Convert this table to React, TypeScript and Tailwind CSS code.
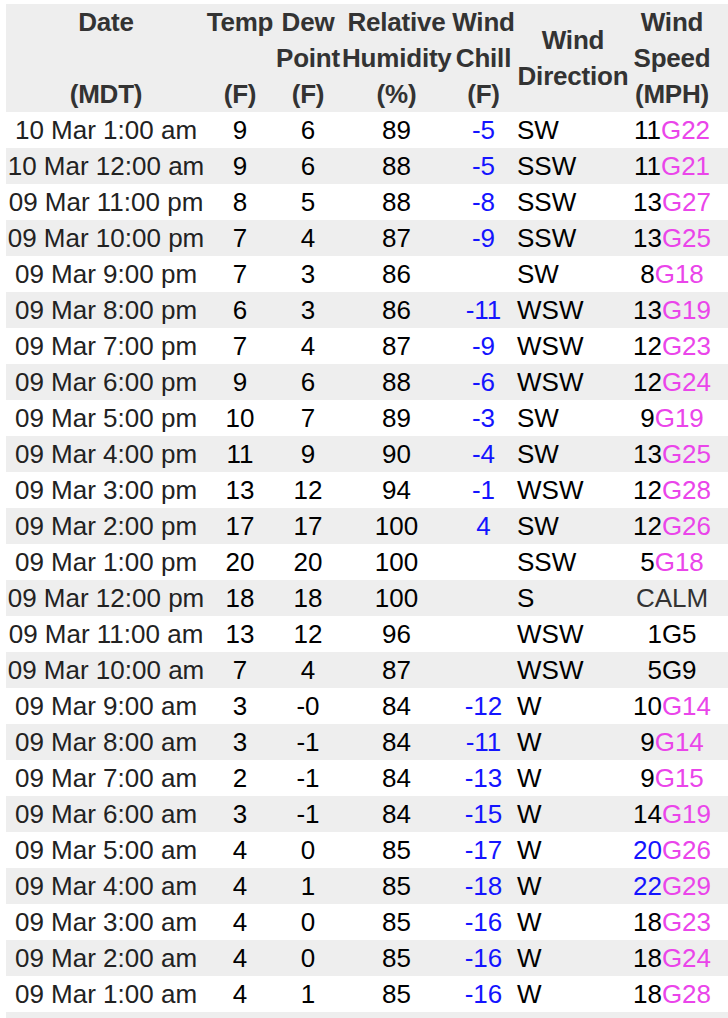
type Row = {
  date: string;
  temp: string;
  dew: string;
  rh: string;
  chill: string;
  dir: string;
  speed: string;
  gust?: string;
  speedBlue?: boolean;
  plainGust?: boolean;
};

const rows: Row[] = [
  { date: "10 Mar 1:00 am", temp: "9", dew: "6", rh: "89", chill: "-5", dir: "SW", speed: "11", gust: "G22" },
  { date: "10 Mar 12:00 am", temp: "9", dew: "6", rh: "88", chill: "-5", dir: "SSW", speed: "11", gust: "G21" },
  { date: "09 Mar 11:00 pm", temp: "8", dew: "5", rh: "88", chill: "-8", dir: "SSW", speed: "13", gust: "G27" },
  { date: "09 Mar 10:00 pm", temp: "7", dew: "4", rh: "87", chill: "-9", dir: "SSW", speed: "13", gust: "G25" },
  { date: "09 Mar 9:00 pm", temp: "7", dew: "3", rh: "86", chill: "", dir: "SW", speed: "8", gust: "G18" },
  { date: "09 Mar 8:00 pm", temp: "6", dew: "3", rh: "86", chill: "-11", dir: "WSW", speed: "13", gust: "G19" },
  { date: "09 Mar 7:00 pm", temp: "7", dew: "4", rh: "87", chill: "-9", dir: "WSW", speed: "12", gust: "G23" },
  { date: "09 Mar 6:00 pm", temp: "9", dew: "6", rh: "88", chill: "-6", dir: "WSW", speed: "12", gust: "G24" },
  { date: "09 Mar 5:00 pm", temp: "10", dew: "7", rh: "89", chill: "-3", dir: "SW", speed: "9", gust: "G19" },
  { date: "09 Mar 4:00 pm", temp: "11", dew: "9", rh: "90", chill: "-4", dir: "SW", speed: "13", gust: "G25" },
  { date: "09 Mar 3:00 pm", temp: "13", dew: "12", rh: "94", chill: "-1", dir: "WSW", speed: "12", gust: "G28" },
  { date: "09 Mar 2:00 pm", temp: "17", dew: "17", rh: "100", chill: "4", dir: "SW", speed: "12", gust: "G26" },
  { date: "09 Mar 1:00 pm", temp: "20", dew: "20", rh: "100", chill: "", dir: "SSW", speed: "5", gust: "G18" },
  { date: "09 Mar 12:00 pm", temp: "18", dew: "18", rh: "100", chill: "", dir: "S", speed: "CALM" },
  { date: "09 Mar 11:00 am", temp: "13", dew: "12", rh: "96", chill: "", dir: "WSW", speed: "1", gust: "G5", plainGust: true },
  { date: "09 Mar 10:00 am", temp: "7", dew: "4", rh: "87", chill: "", dir: "WSW", speed: "5", gust: "G9", plainGust: true },
  { date: "09 Mar 9:00 am", temp: "3", dew: "-0", rh: "84", chill: "-12", dir: "W", speed: "10", gust: "G14" },
  { date: "09 Mar 8:00 am", temp: "3", dew: "-1", rh: "84", chill: "-11", dir: "W", speed: "9", gust: "G14" },
  { date: "09 Mar 7:00 am", temp: "2", dew: "-1", rh: "84", chill: "-13", dir: "W", speed: "9", gust: "G15" },
  { date: "09 Mar 6:00 am", temp: "3", dew: "-1", rh: "84", chill: "-15", dir: "W", speed: "14", gust: "G19" },
  { date: "09 Mar 5:00 am", temp: "4", dew: "0", rh: "85", chill: "-17", dir: "W", speed: "20", gust: "G26", speedBlue: true },
  { date: "09 Mar 4:00 am", temp: "4", dew: "1", rh: "85", chill: "-18", dir: "W", speed: "22", gust: "G29", speedBlue: true },
  { date: "09 Mar 3:00 am", temp: "4", dew: "0", rh: "85", chill: "-16", dir: "W", speed: "18", gust: "G23" },
  { date: "09 Mar 2:00 am", temp: "4", dew: "0", rh: "85", chill: "-16", dir: "W", speed: "18", gust: "G24" },
  { date: "09 Mar 1:00 am", temp: "4", dew: "1", rh: "85", chill: "-16", dir: "W", speed: "18", gust: "G28" },
];

const SpeedCell = ({ row }: { row: Row }) => {
  if (row.speed === "CALM") return <span className="text-[#333]">CALM</span>;
  return (
    <span>
      <span className={row.speedBlue ? "text-[#1414ff]" : "text-black"}>{row.speed}</span>
      <span className={row.plainGust ? "text-black" : "text-[#ea45ea]"}>{row.gust}</span>
    </span>
  );
};

export default function App() {
  return (
    <div className="w-[728px] h-[1018px] overflow-hidden bg-white pt-[4px] pl-[6px]">
      <table
        className="w-[722px] table-fixed border-collapse text-[26px] leading-[36px]"
        style={{ fontFamily: '"Liberation Sans", Arial, sans-serif' }}
      >
        <colgroup>
          <col className="w-[200px]" />
          <col className="w-[68px]" />
          <col className="w-[68px]" />
          <col className="w-[109px]" />
          <col className="w-[65px]" />
          <col className="w-[114px]" />
          <col className="w-[98px]" />
        </colgroup>
        <thead>
          <tr className="bg-[#eeeeee] text-[#333] font-bold align-middle">
            <th className="p-0 text-center tracking-[-0.2px]">
              Date
              <br />
              <br />
              (MDT)
            </th>
            <th className="p-0 text-center tracking-[-0.2px]">
              Temp
              <br />
              <br />
              (F)
            </th>
            <th className="p-0 text-center tracking-[-0.2px]">
              Dew
              <br />
              Point
              <br />
              (F)
            </th>
            <th className="p-0 text-center tracking-[-0.2px]">
              Relative
              <br />
              Humidity
              <br />
              (%)
            </th>
            <th className="p-0 text-center tracking-[-0.2px]">
              Wind
              <br />
              Chill
              <br />
              (F)
            </th>
            <th className="p-0 text-center tracking-[-0.2px]">
              Wind
              <br />
              Direction
            </th>
            <th className="p-0 pr-[14px] text-center tracking-[-0.2px]">
              Wind
              <br />
              Speed
              <br />
              (MPH)
            </th>
          </tr>
        </thead>
        <tbody>
          {rows.map((r, i) => (
            <tr key={r.date} className={i % 2 === 1 ? "bg-[#eeeeee] h-9" : "bg-white h-9"}>
              <td className="p-0 text-center text-[#222] whitespace-nowrap">{r.date}</td>
              <td className="p-0 text-center text-black">{r.temp}</td>
              <td className="p-0 text-center text-black">{r.dew}</td>
              <td className="p-0 text-center text-black">{r.rh}</td>
              <td className="p-0 text-center text-[#1414ff]">{r.chill}</td>
              <td className="p-0 pl-[1px] text-left text-black">{r.dir}</td>
              <td className="p-0 pr-[14px] text-center whitespace-nowrap">
                <SpeedCell row={r} />
              </td>
            </tr>
          ))}
          <tr className="bg-[#eeeeee] h-9">
            <td colSpan={7} className="p-0" />
          </tr>
        </tbody>
      </table>
    </div>
  );
}
